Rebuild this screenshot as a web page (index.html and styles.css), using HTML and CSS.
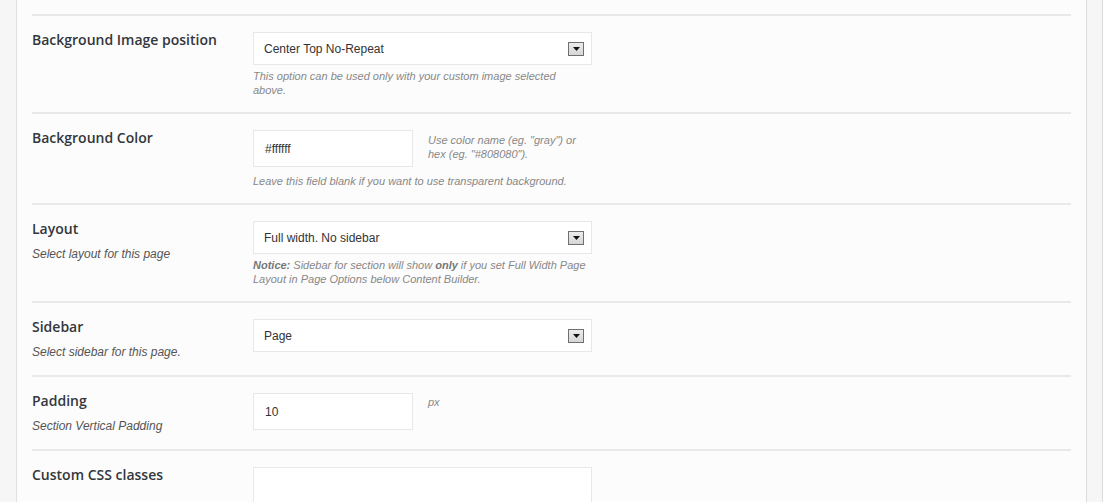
FILE: index.html
```html
<!DOCTYPE html>
<html>
<head>
<meta charset="utf-8">
<link rel="stylesheet" href="styles.css">
</head>
<body>
<div class="frame">
  <div class="gutter-left"></div>
  <div class="panel">
    <div class="row">
      <div class="label-col"><div class="label">Background Image position</div></div>
      <div class="field-col">
        <div class="select"><span>Center Top No-Repeat</span><span class="arrow"><svg width="7" height="4" viewBox="0 0 7 4"><polygon points="0,0 7,0 3.5,4" fill="#111"/></svg></span></div>
        <div class="help">This option can be used only with your custom image selected above.</div>
      </div>
    </div>
    <div class="row">
      <div class="label-col"><div class="label">Background Color</div></div>
      <div class="field-col">
        <div class="inline">
          <div class="input small">#ffffff</div>
          <div class="side">Use color name (eg. "gray") or hex (eg. "#808080").</div>
        </div>
        <div class="help help-gap">Leave this field blank if you want to use transparent background.</div>
      </div>
    </div>
    <div class="row">
      <div class="label-col"><div class="label">Layout</div><div class="sub">Select layout for this page</div></div>
      <div class="field-col">
        <div class="select"><span>Full width. No sidebar</span><span class="arrow"><svg width="7" height="4" viewBox="0 0 7 4"><polygon points="0,0 7,0 3.5,4" fill="#111"/></svg></span></div>
        <div class="help"><b>Notice:</b> Sidebar for section will show <b>only</b> if you set Full Width Page Layout in Page Options below Content Builder.</div>
      </div>
    </div>
    <div class="row">
      <div class="label-col"><div class="label">Sidebar</div><div class="sub">Select sidebar for this page.</div></div>
      <div class="field-col">
        <div class="select"><span>Page</span><span class="arrow"><svg width="7" height="4" viewBox="0 0 7 4"><polygon points="0,0 7,0 3.5,4" fill="#111"/></svg></span></div>
      </div>
    </div>
    <div class="row">
      <div class="label-col"><div class="label">Padding</div><div class="sub">Section Vertical Padding</div></div>
      <div class="field-col">
        <div class="inline">
          <div class="input small">10</div>
          <div class="side unit">px</div>
        </div>
      </div>
    </div>
    <div class="row">
      <div class="label-col"><div class="label">Custom CSS classes</div></div>
      <div class="field-col">
        <div class="input wide"></div>
      </div>
    </div>
  </div>
  <div class="gutter-right"></div>
</div>
</body>
</html>
```

FILE: styles.css
```css
html, body {
  margin: 0;
  padding: 0;
  background: #ffffff;
}
.frame {
  display: flex;
  width: 1103px;
  height: 502px;
  overflow: hidden;
}
.gutter-left {
  width: 16px;
  flex: none;
  background: #f6f6f6;
  border-right: 1px solid #e1e1e1;
}
.gutter-right {
  width: 15px;
  flex: none;
  background: #f6f6f6;
  border-left: 1px solid #dcdcdc;
  border-right: 1px solid #dcdcdc;
}
.panel {
  flex: 1;
  background: #fcfcfc;
  padding: 14px 15px 0 15px;
  overflow: hidden;
}
.row {
  display: grid;
  grid-template-columns: 221px 1fr;
  border-top: 2px solid #e9e9e9;
  padding: 16px 0 15px 0;
}
.label {
  font-family: "Open Sans", "Liberation Sans", sans-serif;
  font-weight: 600;
  font-size: 14px;
  line-height: 16px;
  color: #32373c;
}
.sub {
  margin-top: 9px;
  font-family: "Liberation Sans", Arial, sans-serif;
  font-style: italic;
  font-size: 12px;
  line-height: 16px;
  color: #555;
}
.select {
  box-sizing: border-box;
  width: 339px;
  height: 33px;
  background: #fff;
  border: 1px solid #e8e8e8;
  display: flex;
  align-items: center;
  justify-content: space-between;
  padding: 0 7px 0 10px;
  font-family: "Liberation Sans", Arial, sans-serif;
  font-size: 12px;
  color: #333;
}
.arrow {
  box-sizing: border-box;
  width: 16px;
  height: 14px;
  border: 1px solid #6f6f6f;
  background: linear-gradient(#ececec, #d6d6d6);
  display: flex;
  align-items: center;
  justify-content: center;
}
.arrow svg { display: block; }
.input {
  box-sizing: border-box;
  height: 37px;
  background: #fff;
  border: 1px solid #e8e8e8;
  display: flex;
  align-items: center;
  padding: 0 11px;
  font-family: "Liberation Sans", Arial, sans-serif;
  font-size: 12px;
  color: #333;
}
.input.small { width: 160px; flex: none; }
.input.wide { width: 339px; height: 70px; }
.inline {
  display: flex;
  align-items: flex-start;
}
.side {
  width: 163px;
  margin-left: 15px;
  padding-top: 3px;
  font-family: "Liberation Sans", Arial, sans-serif;
  font-style: italic;
  font-size: 11px;
  line-height: 14px;
  color: #888;
}
.side.unit { padding-top: 2px; }
.help {
  width: 336px;
  margin-top: 4px;
  font-family: "Liberation Sans", Arial, sans-serif;
  font-style: italic;
  font-size: 11px;
  line-height: 14px;
  color: #888;
}
.help b { color: #777; font-weight: bold; }
.help.help-gap { margin-top: 7px; }
```
